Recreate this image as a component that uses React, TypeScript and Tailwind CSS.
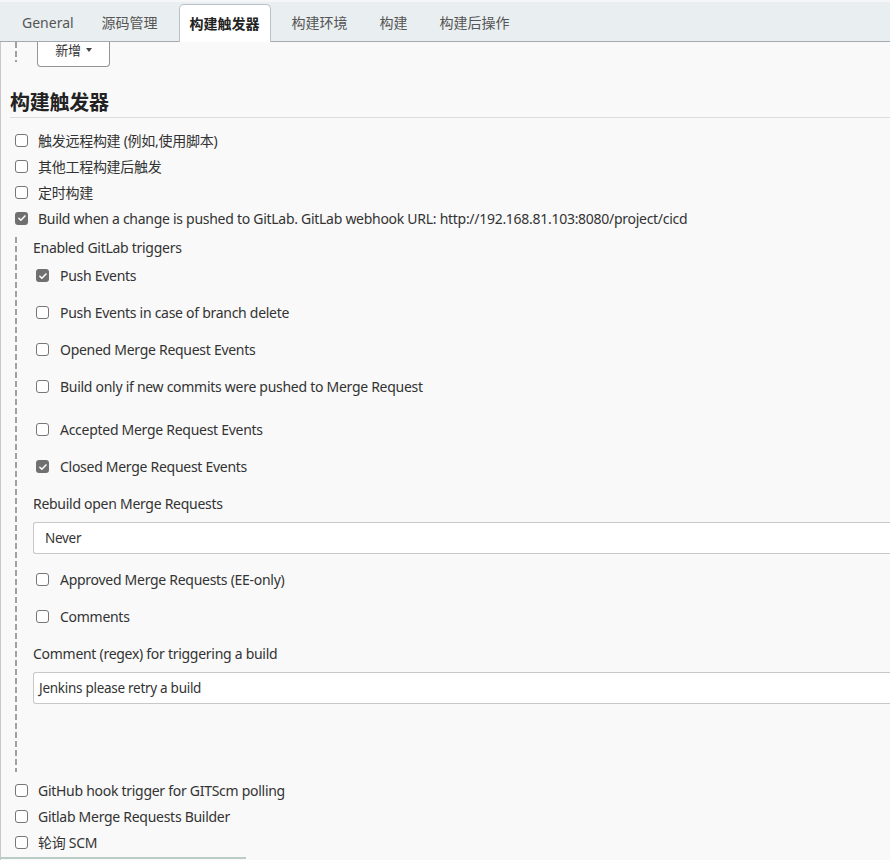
import React from 'react'

const tabs = ['General', '源码管理', '构建触发器', '构建环境', '构建', '构建后操作']

// vertical dashed guide drawn as a repeating background strip on the left edge
const dashed =
  'bg-[linear-gradient(to_bottom,#a0a0a0_6px,transparent_6px)] bg-[length:2px_9px] bg-repeat-y'

function Box({ checked }: { checked?: boolean }) {
  if (checked) {
    return (
      <span className="flex h-[13px] w-[13px] shrink-0 items-center justify-center rounded-[3px] bg-[#707070]">
        <svg viewBox="0 0 12 12" className="h-[10px] w-[10px]">
          <path d="M2.2 6.3l2.4 2.4 5-5.2" fill="none" stroke="#fff" strokeWidth="1.8" strokeLinecap="round" strokeLinejoin="round" />
        </svg>
      </span>
    )
  }
  return <span className="h-[13px] w-[13px] shrink-0 rounded-[3px] border border-[#767676] bg-white" />
}

function Row({ label, checked, tall }: { label: string; checked?: boolean; tall?: boolean }) {
  return (
    <div className={`flex items-center ${tall ? 'h-[37px] gap-[11px] pl-[3px]' : 'h-[26px] gap-[10px] pl-[14px]'}`}>
      <Box checked={checked} />
      <span>{label}</span>
    </div>
  )
}

export default function App() {
  return (
    <div
      className="h-[860px] w-[890px] overflow-hidden bg-[#f9f9f9] text-[14px] tracking-[-0.28px] text-[#333]"
      style={{ fontFamily: '"Noto Sans", "Noto Sans CJK SC", sans-serif' }}
    >
      {/* tab bar */}
      <div className="border-t-2 border-[#f4f6f7] bg-[#e9eef0]">
        <div className="flex h-[40px] items-end border-b border-[#a3abb0] pl-[6px]">
          {tabs.map((t, i) => {
            const active = t === '构建触发器'
            return (
              <div
                key={t}
                className={
                  active
                    ? '-mb-px mx-[5px] flex h-[38px] items-center rounded-t-[5px] border border-b-0 border-[#b9c0c4] bg-white pl-[10px] pr-[10px] font-bold tracking-normal text-[#222]'
                    : `flex h-[38px] items-center tracking-normal text-[#555] ${i === 0 ? 'pl-[16px] pr-[12px]' : 'px-[16px]'}`
                }
              >
                {t}
              </div>
            )
          })}
        </div>
      </div>

      <div className="h-[818px] border-l border-[#c8c8c8]">
        {/* tail of previous section */}
        <div className={`ml-[14px] h-[20px] ${dashed}`} />
        <div className="relative -mt-[20px] ml-[36px] flex h-[25px] w-[73px] items-start justify-center gap-[5px] rounded-b-[4px] border-[1.5px] border-t-0 border-[#959595] bg-white text-[13px] leading-[16px]">
          <span>新增</span>
          <span className="mt-[6px] h-0 w-0 border-x-[3.5px] border-t-[4px] border-x-transparent border-t-[#444]" />
        </div>

        {/* heading */}
        <div className="ml-[9px] mt-[25px] flex h-[26px] items-center border-b border-[#dcdcdc] pb-[3px] text-[20px] font-bold leading-none text-[#222]">
          构建触发器
        </div>

        <div className="mt-[9px]">
          <Row label="触发远程构建 (例如,使用脚本)" />
          <Row label="其他工程构建后触发" />
          <Row label="定时构建" />
          <Row checked label="Build when a change is pushed to GitLab. GitLab webhook URL: http://192.168.81.103:8080/project/cicd" />
        </div>

        {/* nested GitLab options */}
        <div className={`ml-[14px] mt-[6px] h-[535px] pl-[18px] ${dashed}`}>
          <div className="flex h-[20px] items-center">Enabled GitLab triggers</div>
          <Row tall checked label="Push Events" />
          <Row tall label="Push Events in case of branch delete" />
          <Row tall label="Opened Merge Request Events" />
          <Row tall label="Build only if new commits were pushed to Merge Request" />
          <div className="mt-[6px]">
            <Row tall label="Accepted Merge Request Events" />
            <Row tall checked label="Closed Merge Request Events" />
          </div>
          <div className="flex h-[37px] items-center">Rebuild open Merge Requests</div>
          <div className="flex h-[32px] items-center rounded-l-[3px] border border-r-0 border-[#c8c8c8] bg-white pl-[11px] text-[13.5px]">
            Never
          </div>
          <div className="mt-[7px]">
            <Row tall label="Approved Merge Requests (EE-only)" />
            <Row tall label="Comments" />
          </div>
          <div className="flex h-[37px] items-center">Comment (regex) for triggering a build</div>
          <div className="flex h-[32px] items-center rounded-l-[3px] border border-r-0 border-[#c8c8c8] bg-white pl-[5px] text-[13.5px]">
            Jenkins please retry a build
          </div>
        </div>

        <div className="mt-[5px]">
          <Row label="GitHub hook trigger for GITScm polling" />
          <Row label="Gitlab Merge Requests Builder" />
          <Row label="轮询 SCM" />
        </div>

        <div className="mt-[2px] h-[2px] w-[245px] bg-[#b9ccc6]" />
      </div>
    </div>
  )
}
